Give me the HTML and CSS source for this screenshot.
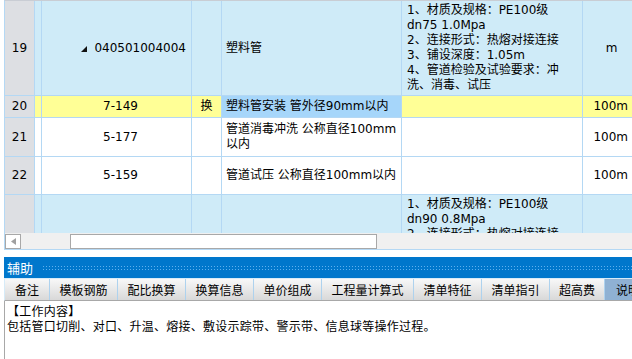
FILE: index.html
```html
<!doctype html>
<html>
  <head>
    <title>清单定额</title>
    <meta name="viewport" content="width=device-width, initial-scale=1">
    <link rel="stylesheet" href="styles.css">
  </head>
  <body>
    <div class="sheet">
      <div class="view">
        <div class="grid">
          <!-- 19 -->
          <div class="cell num">19</div>
          <div class="cell blue"></div>
          <div class="cell blue code tree"><svg class="tri" width="6" height="6" viewBox="0 0 6 6"><polygon points="6,0 6,6 0,6" fill="#111"/></svg>040501004004</div>
          <div class="cell blue"></div>
          <div class="cell blue name">塑料管</div>
          <div class="cell blue feat">1、材质及规格：PE100级 dn75 1.0Mpa<br>2、连接形式：热熔对接连接<br>3、铺设深度：1.05m<br>4、管道检验及试验要求：冲洗、消毒、试压</div>
          <div class="cell blue unit mid">m</div>
          <!-- 20 -->
          <div class="cell num">20</div>
          <div class="cell yellow"></div>
          <div class="cell yellow code">7-149</div>
          <div class="cell yellow swap">换</div>
          <div class="cell selected name">塑料管安装 管外径90mm以内</div>
          <div class="cell yellow feat"></div>
          <div class="cell yellow unit">100m</div>
          <!-- 21 -->
          <div class="cell num">21</div>
          <div class="cell"></div>
          <div class="cell code">5-177</div>
          <div class="cell"></div>
          <div class="cell name">管道消毒冲洗 公称直径100mm以内</div>
          <div class="cell feat"></div>
          <div class="cell unit">100m</div>
          <!-- 22 -->
          <div class="cell num">22</div>
          <div class="cell"></div>
          <div class="cell code">5-159</div>
          <div class="cell"></div>
          <div class="cell name">管道试压 公称直径100mm以内</div>
          <div class="cell feat"></div>
          <div class="cell unit">100m</div>
          <!-- 23 -->
          <div class="cell num"></div>
          <div class="cell blue"></div>
          <div class="cell blue code"></div>
          <div class="cell blue"></div>
          <div class="cell blue name"></div>
          <div class="cell blue feat">1、材质及规格：PE100级 dn90 0.8Mpa<br>2、连接形式：热熔对接连接</div>
          <div class="cell blue unit"></div>
        </div>
      </div>
      <div class="hscroll">
        <div class="arrow"><svg width="5" height="7" viewBox="0 0 5 7"><polygon points="5,0 5,7 0,3.5" fill="#a0a0a0"/></svg></div>
        <div class="thumb"></div>
      </div>
    </div>

    <div class="aux">
      <div class="aux-title">辅助<span class="dots"></span></div>
      <div class="tabs">
        <div class="tab w44">备注</div>
        <div class="tab">模板钢筋</div>
        <div class="tab">配比换算</div>
        <div class="tab">换算信息</div>
        <div class="tab">单价组成</div>
        <div class="tab w91">工程量计算式</div>
        <div class="tab">清单特征</div>
        <div class="tab">清单指引</div>
        <div class="tab w54">超高费</div>
        <div class="tab active">说明</div>
      </div>
      <div class="aux-body">
        【工作内容】<br>
        包括管口切削、对口、升温、熔接、敷设示踪带、警示带、信息球等操作过程。
      </div>
    </div>
  </body>
</html>
```

FILE: styles.css
```css
html {
  box-sizing: border-box;
}
*, *::before, *::after {
  box-sizing: inherit;
}
body {
  margin: 0;
  width: 632px;
  height: 359px;
  overflow: hidden;
  background: #fff;
  font-family: "DejaVu Sans", "Noto Sans CJK SC", sans-serif;
  font-size: 12px;
  color: #000;
}

/* grid part */
.sheet {
  margin-left: 4px;
  border-left: 1px solid #b4d8f4;
  border-top: 1px solid #c9cdd4;
  border-bottom: 1px solid #b4d8f4;
}
.view {
  height: 232px;
  overflow: hidden;
}
.grid {
  display: grid;
  grid-template-columns: 29px 6px 149px 29px 179px 180px 49px;
  grid-template-rows: 94px 21px 38px 37px 60px;
  gap: 1px;
  background: #b4d8f4;
}
.cell {
  background: #fff;
  display: flex;
  align-items: center;
  line-height: 15px;
  white-space: nowrap;
  overflow: hidden;
}
.num {
  background: #dddfe3;
  justify-content: center;
}
.blue {
  background: #cfebf8;
}
.yellow {
  background: #ffff96;
}
.selected {
  background: #a6d6fa;
}
.code {
  justify-content: center;
  padding-left: 8px;
}
.code.tree {
  justify-content: flex-end;
  padding-right: 5px;
}
.tri {
  margin-right: 7px;
  margin-top: 2px;
}
.swap {
  justify-content: center;
}
.name {
  padding: 0 4px;
  white-space: normal;
}
.feat {
  align-items: flex-start;
  padding: 2px 20px 0 5px;
  white-space: normal;
}
.unit {
  justify-content: flex-end;
  padding-right: 4px;
}
.unit.mid {
  justify-content: center;
  padding: 0 0 0 8px;
}

/* horizontal scroll bar */
.hscroll {
  height: 16px;
  background: #f0f0f0;
  display: flex;
  align-items: center;
  padding-top: 1px;
}
.arrow {
  width: 16px;
  height: 15px;
  background: #fff;
  border: 1px solid #a8a8a8;
  display: flex;
  align-items: center;
  justify-content: center;
}
.thumb {
  margin-left: 49px;
  width: 307px;
  height: 15px;
  background: #fff;
  border: 1px solid #a8a8a8;
}

/* auxiliary panel */
.aux {
  margin: 7px 0 0 4px;
}
.aux-title {
  height: 21px;
  background: #0077cc;
  color: #fff;
  font-size: 13px;
  display: flex;
  align-items: center;
  padding-left: 3px;
}
.dots {
  flex: 1;
  height: 6px;
  margin-left: 9px;
  background-image: radial-gradient(circle, #5fb0ee 40%, transparent 45%);
  background-size: 3px 3px;
}
.tabs {
  display: flex;
  border-top: 1px solid #d6ebf8;
  border-bottom: 1px solid #a8a8a8;
  border-left: 1px solid #d6ebf8;
  height: 23px;
}
.tab {
  width: 68px;
  border-right: 1px solid #aed2ee;
  background: linear-gradient(#f8f8f8, #d8d8d8);
  display: flex;
  align-items: center;
  justify-content: center;
  white-space: nowrap;
}
.tab.w44 { width: 45px; }
.tab.w91 { width: 92px; }
.tab.w54 { width: 55px; }
.tab.active {
  flex: 1;
  background: #8fb1d3;
  border-right: none;
  justify-content: flex-start;
  padding-left: 11px;
  overflow: hidden;
}
.aux-body {
  border-left: 1px solid #a8a8a8;
  height: 60px;
  padding: 4px 2px;
  line-height: 15px;
  letter-spacing: 0.25px;
}
```
